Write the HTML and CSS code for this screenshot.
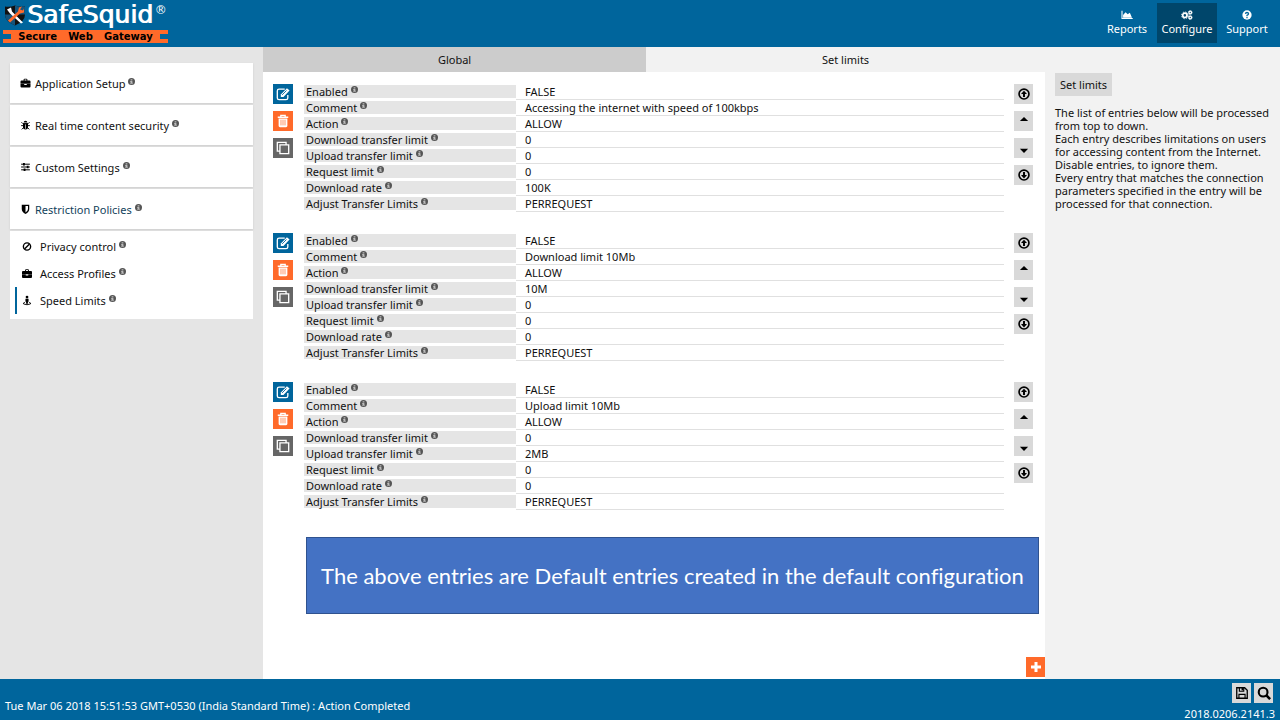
FILE: index.html
```html
<!DOCTYPE html>
<html lang="en">
<head>
<meta charset="utf-8">
<title>SafeSquid - Speed Limits</title>
<link rel="stylesheet" href="styles.css">
</head>
<body>
<svg class="sprite" aria-hidden="true">
  <symbol id="info" viewBox="0 0 16 16"><circle cx="8" cy="8" r="8" fill="#555"/><path d="M6 3h4v2.500H6zM5 7h5v4h1v2H5v-2h1V9H5z" fill="#bbb"/></symbol>
  <symbol id="case" viewBox="0 0 16 16"><path d="M5 4V2.500Q5 1 6.500 1h3Q11 1 11 2.500V4h3.500Q16 4 16 5.500V9H0V5.500Q0 4 1.500 4zm1.500 0h3V2.500h-3zM0 9.500h6v1.500h4V9.500h6v4q0 1.500-1.500 1.500h-13Q0 15 0 13.500z"/></symbol>
  <symbol id="edit" viewBox="0 0 16 16"><path d="M10 2.500H3.500Q1.500 2.500 1.500 4.500v8q0 2 2 2h8q2 0 2-2V9" fill="none" stroke="#fff" stroke-width="1.500"/><path d="M5.500 8.500l7-7L15.500 4l-7 7.500h-3z" fill="#fff"/><path d="M7 9l5-5" stroke="#00659c"/></symbol>
  <symbol id="trash" viewBox="0 0 16 16"><path d="M5.500 3V1.500h5V3M2 3.700h12" fill="none" stroke="#fff" stroke-width="1.500"/><path d="M3 5h10v8.500q0 1.500-1.500 1.500h-7Q3 15 3 13.500z" fill="#fff"/><path d="M5.700 6.500V13M8 6.500V13m2.300-6.500V13" stroke="#ff6a2a" stroke-width=".8"/></symbol>
  <symbol id="copy" viewBox="0 0 16 16"><path d="M4 11.500H1.500v-10h10V4M4.500 4.500h10v10h-10z" fill="none" stroke="#fff" stroke-width="1.500"/></symbol>
  <symbol id="top" viewBox="0 0 16 16"><circle cx="8" cy="8" r="6.600" fill="none" stroke="#000" stroke-width="2.200"/><path d="M8 3.500L12 8H9.300v4H6.700V8H4z"/></symbol>
  <symbol id="bottom" viewBox="0 0 16 16"><circle cx="8" cy="8" r="6.600" fill="none" stroke="#000" stroke-width="2.200"/><path d="M8 12.500L12 8H9.300V4H6.700v4H4z"/></symbol>
  <symbol id="up" viewBox="0 0 16 16"><path d="M2.500 8L8 2.500 13.500 8z"/></symbol>
  <symbol id="down" viewBox="0 0 16 16"><path d="M2.500 9L8 14.500 13.500 9z"/></symbol>
</svg>

<header class="topbar">
  <a class="brand" href="#">
    <span class="brand-main">
      <svg class="shield" viewBox="0 0 22 22" aria-hidden="true"><path d="M1 2q5 1 10-1 5 2 10 1v8q0 7-10 11Q1 17 1 10z" fill="#111"/><path d="M11 1q5 2 10 1v8H11zM1 10h10v11Q1 17 1 10z" fill="#17547b"/><path d="M3 5l4-2 1 4 11 11-2 1L6 9z" fill="#fff"/><path d="M18 2l-2 3 3 1 1-2v4l-4 1L6 18l-2-2L14 7l1-4z" fill="#ff6a2a"/></svg>
      <span class="brand-name">SafeSquid</span><span class="brand-mark">®</span>
    </span>
    <span class="brand-sub"><span>Secure</span><span>Web</span><span>Gateway</span></span>
  </a>
  <nav class="topnav">
    <a href="#"><svg viewBox="0 0 16 14" aria-hidden="true"><path d="M1 1v11h15" fill="none" stroke="#fff" stroke-width="1.500"/><path d="M2.500 11V7L6 3l3 3 3-2 3 7z" fill="#fff"/></svg>Reports</a>
    <a class="active" href="#"><svg viewBox="0 0 16 14" aria-hidden="true"><g fill="none" stroke="#fff"><circle cx="5" cy="7.500" r="3" stroke-width="2.400"/><circle cx="5" cy="7.500" r="4.700" stroke-width="1.200" stroke-dasharray="2 1.690"/><circle cx="12.500" cy="3.500" r="1.800" stroke-width="1.800"/><circle cx="12.500" cy="3.500" r="2.800" stroke-dasharray="1.200 1"/><circle cx="12.500" cy="10.500" r="1.800" stroke-width="1.800"/><circle cx="12.500" cy="10.500" r="2.800" stroke-dasharray="1.200 1"/></g></svg>Configure</a>
    <a href="#"><svg viewBox="0 0 16 14" aria-hidden="true"><circle cx="8" cy="7" r="6.500" fill="#fff"/><path d="M5.800 5.500Q6 3.500 8 3.500t2.200 1.800Q10.200 6.500 8 7.500v1M8 9.500v2" fill="none" stroke="#00659c" stroke-width="1.800"/></svg>Support</a>
  </nav>
</header>

<main class="workspace">
  <aside class="sidebar">
    <nav class="menu">
      <a class="group" href="#"><svg class="icon" aria-hidden="true"><use href="#case"/></svg><span>Application Setup <svg class="info"><use href="#info"/></svg></span></a>
      <a class="group" href="#"><svg class="icon" viewBox="0 0 16 16" aria-hidden="true"><path d="M5 4q0-3 3-3t3 3zM4 5h8v6q0 4-4 4t-4-4z"/><path d="M1.500 3.500L4 6h8l2.500-2.500M1 9h14M2 15l3-3h6l3 3" fill="none" stroke="#000" stroke-width="1.500"/><path d="M8 7v7" stroke="#fff"/></svg><span>Real time content security <svg class="info"><use href="#info"/></svg></span></a>
      <a class="group" href="#"><svg class="icon" viewBox="0 0 16 16" aria-hidden="true"><path d="M1 3.500h14M1 8h14M1 12.500h14" stroke="#000" stroke-width="1.600"/><path d="M4 1.500h3v4H4zM10 6h3v4h-3zM5 10.500h3v4H5z"/></svg><span>Custom Settings <svg class="info"><use href="#info"/></svg></span></a>
      <a class="group open" href="#"><svg class="icon" viewBox="0 0 16 16" aria-hidden="true"><path d="M2 1h12v7q0 5-6 8-6-3-6-8zm6 2v10.500q4-2.500 4-5.500V3z" fill-rule="evenodd"/></svg><span>Restriction Policies <svg class="info"><use href="#info"/></svg></span></a>
      <div class="submenu">
        <a href="#"><svg class="icon" viewBox="0 0 16 16" aria-hidden="true"><circle cx="8" cy="8" r="5.800" fill="none" stroke="#000" stroke-width="2.200"/><path d="M4 12l8-8" stroke="#000" stroke-width="2.200"/></svg><span>Privacy control <svg class="info"><use href="#info"/></svg></span></a>
        <a href="#"><svg class="icon" aria-hidden="true"><use href="#case"/></svg><span>Access Profiles <svg class="info"><use href="#info"/></svg></span></a>
        <a class="current" href="#"><svg class="icon" viewBox="0 0 16 16" aria-hidden="true"><circle cx="8" cy="2.500" r="2.200"/><path d="M5.500 5h5v5H9.500v3h-3v-3h-1z"/><path d="M4.500 11Q1 12 2.500 13.500q5.500 2.500 11 0Q15 12 11.500 11" fill="none" stroke="#000" stroke-width="1.500"/></svg><span>Speed Limits <svg class="info"><use href="#info"/></svg></span></a>
      </div>
    </nav>
  </aside>

  <section class="content">
    <div class="tabs" role="tablist">
      <button class="tab" role="tab" type="button">Global</button>
      <button class="tab selected" role="tab" type="button" aria-selected="true">Set limits</button>
    </div>
    <div class="entries">
      <article class="entry">
        <div class="tools">
          <button class="edit" type="button" aria-label="Edit"><svg><use href="#edit"/></svg></button>
          <button class="delete" type="button" aria-label="Delete"><svg><use href="#trash"/></svg></button>
          <button class="clone" type="button" aria-label="Clone"><svg><use href="#copy"/></svg></button>
        </div>
        <table class="fields">
          <tr><th scope="row">Enabled <svg class="info"><use href="#info"/></svg></th><td>FALSE</td></tr>
          <tr><th scope="row">Comment <svg class="info"><use href="#info"/></svg></th><td>Accessing the internet with speed of 100kbps</td></tr>
          <tr><th scope="row">Action <svg class="info"><use href="#info"/></svg></th><td>ALLOW</td></tr>
          <tr><th scope="row">Download transfer limit <svg class="info"><use href="#info"/></svg></th><td>0</td></tr>
          <tr><th scope="row">Upload transfer limit <svg class="info"><use href="#info"/></svg></th><td>0</td></tr>
          <tr><th scope="row">Request limit <svg class="info"><use href="#info"/></svg></th><td>0</td></tr>
          <tr><th scope="row">Download rate <svg class="info"><use href="#info"/></svg></th><td>100K</td></tr>
          <tr><th scope="row">Adjust Transfer Limits <svg class="info"><use href="#info"/></svg></th><td>PERREQUEST</td></tr>
        </table>
        <div class="tools order">
          <button type="button" aria-label="Move to top"><svg><use href="#top"/></svg></button>
          <button type="button" aria-label="Move up"><svg><use href="#up"/></svg></button>
          <button type="button" aria-label="Move down"><svg><use href="#down"/></svg></button>
          <button type="button" aria-label="Move to bottom"><svg><use href="#bottom"/></svg></button>
        </div>
      </article>
      <article class="entry">
        <div class="tools">
          <button class="edit" type="button" aria-label="Edit"><svg><use href="#edit"/></svg></button>
          <button class="delete" type="button" aria-label="Delete"><svg><use href="#trash"/></svg></button>
          <button class="clone" type="button" aria-label="Clone"><svg><use href="#copy"/></svg></button>
        </div>
        <table class="fields">
          <tr><th scope="row">Enabled <svg class="info"><use href="#info"/></svg></th><td>FALSE</td></tr>
          <tr><th scope="row">Comment <svg class="info"><use href="#info"/></svg></th><td>Download limit 10Mb</td></tr>
          <tr><th scope="row">Action <svg class="info"><use href="#info"/></svg></th><td>ALLOW</td></tr>
          <tr><th scope="row">Download transfer limit <svg class="info"><use href="#info"/></svg></th><td>10M</td></tr>
          <tr><th scope="row">Upload transfer limit <svg class="info"><use href="#info"/></svg></th><td>0</td></tr>
          <tr><th scope="row">Request limit <svg class="info"><use href="#info"/></svg></th><td>0</td></tr>
          <tr><th scope="row">Download rate <svg class="info"><use href="#info"/></svg></th><td>0</td></tr>
          <tr><th scope="row">Adjust Transfer Limits <svg class="info"><use href="#info"/></svg></th><td>PERREQUEST</td></tr>
        </table>
        <div class="tools order">
          <button type="button" aria-label="Move to top"><svg><use href="#top"/></svg></button>
          <button type="button" aria-label="Move up"><svg><use href="#up"/></svg></button>
          <button type="button" aria-label="Move down"><svg><use href="#down"/></svg></button>
          <button type="button" aria-label="Move to bottom"><svg><use href="#bottom"/></svg></button>
        </div>
      </article>
      <article class="entry">
        <div class="tools">
          <button class="edit" type="button" aria-label="Edit"><svg><use href="#edit"/></svg></button>
          <button class="delete" type="button" aria-label="Delete"><svg><use href="#trash"/></svg></button>
          <button class="clone" type="button" aria-label="Clone"><svg><use href="#copy"/></svg></button>
        </div>
        <table class="fields">
          <tr><th scope="row">Enabled <svg class="info"><use href="#info"/></svg></th><td>FALSE</td></tr>
          <tr><th scope="row">Comment <svg class="info"><use href="#info"/></svg></th><td>Upload limit 10Mb</td></tr>
          <tr><th scope="row">Action <svg class="info"><use href="#info"/></svg></th><td>ALLOW</td></tr>
          <tr><th scope="row">Download transfer limit <svg class="info"><use href="#info"/></svg></th><td>0</td></tr>
          <tr><th scope="row">Upload transfer limit <svg class="info"><use href="#info"/></svg></th><td>2MB</td></tr>
          <tr><th scope="row">Request limit <svg class="info"><use href="#info"/></svg></th><td>0</td></tr>
          <tr><th scope="row">Download rate <svg class="info"><use href="#info"/></svg></th><td>0</td></tr>
          <tr><th scope="row">Adjust Transfer Limits <svg class="info"><use href="#info"/></svg></th><td>PERREQUEST</td></tr>
        </table>
        <div class="tools order">
          <button type="button" aria-label="Move to top"><svg><use href="#top"/></svg></button>
          <button type="button" aria-label="Move up"><svg><use href="#up"/></svg></button>
          <button type="button" aria-label="Move down"><svg><use href="#down"/></svg></button>
          <button type="button" aria-label="Move to bottom"><svg><use href="#bottom"/></svg></button>
        </div>
      </article>
    </div>
    <p class="banner">The above entries are Default entries created in the default configuration</p>
    <button class="add" type="button" aria-label="Add entry"><svg viewBox="0 0 16 16"><path d="M8 3v10M3 8h10" stroke="#fff" stroke-width="3"/></svg></button>
  </section>

  <aside class="help">
    <h2>Set limits</h2>
    <p>The list of entries below will be processed from top to down.</p>
    <p>Each entry describes limitations on users for accessing content from the Internet.</p>
    <p>Disable entries, to ignore them.</p>
    <p>Every entry that matches the connection parameters specified in the entry will be processed for that connection.</p>
  </aside>
</main>

<footer class="statusbar">
  <p>Tue Mar 06 2018 15:51:53 GMT+0530 (India Standard Time) : Action Completed</p>
  <div class="status-side">
    <div class="status-tools">
      <button type="button" aria-label="Save"><svg viewBox="0 0 16 16"><path d="M2 2h9l3 3v9H2z" fill="none" stroke="#000" stroke-width="1.500"/><path d="M5 2v4h5V2M4.500 14v-4.500h7V14" fill="none" stroke="#000" stroke-width="1.300"/><path d="M7.500 2h2v3h-2z"/></svg></button>
      <button type="button" aria-label="Search"><svg viewBox="0 0 16 16"><circle cx="7" cy="7" r="5" fill="none" stroke="#000" stroke-width="2.400"/><path d="M10.500 10.500L15 15" stroke="#000" stroke-width="3"/></svg></button>
    </div>
    <span>2018.0206.2141.3</span>
  </div>
</footer>
</body>
</html>
```
FILE: styles.css
```css
* { box-sizing: border-box; }
body {
  margin: 0;
  min-height: 100vh;
  display: flex;
  flex-direction: column;
  font: 11px/13px "Noto Sans", "Open Sans", sans-serif;
  color: #111;
  background: #fff;
}
a { color: inherit; text-decoration: none; }
p, h2 { margin: 0; }
button { border: 0; padding: 0; font: inherit; color: inherit; cursor: pointer; }
svg { display: block; }
.sprite { position: absolute; width: 0; height: 0; }
.info { display: inline-block; width: 7px; height: 7px; vertical-align: 3px; }

.topbar {
  display: flex;
  justify-content: space-between;
  height: 47px;
  background: #00659c;
  color: #fff;
}
.brand { padding-left: 3px; width: 168px; }
.brand-main { display: flex; align-items: flex-start; height: 30px; padding: 4px 0 0 1px; }
.shield { flex: none; width: 22px; height: 23px; }
.brand-name { margin-left: 1px; font: 25px/22px "DejaVu Sans", sans-serif; text-shadow: 1px 0 #fff; }
.brand-mark { margin-left: 2px; font: 12px/12px "DejaVu Sans", sans-serif; }
.brand-sub {
  display: flex;
  justify-content: space-between;
  padding: 0 4px;
  border: solid #ff6a2a;
  border-width: 1px 0;
  background: #ff6a2a;
  color: #000;
  font: bold 10px/11px "DejaVu Sans", sans-serif;
}
.brand-sub::before, .brand-sub::after {
  content: "";
  width: 8px;
  height: 5px;
  margin: 3px -4px;
  background: #00659c;
}
.topnav { display: flex; padding: 3px 3px 4px 0; }
.topnav a {
  display: flex;
  flex-direction: column;
  align-items: center;
  gap: 2px;
  min-width: 60px;
  padding-top: 7px;
}
.topnav svg { width: 12px; height: 10px; }
.topnav .active { background: #00466b; }

.workspace {
  flex: 1;
  display: grid;
  grid-template-columns: 263px minmax(0, 1fr) 235px;
}
.sidebar { padding: 16px 10px; background: #e5e5e5; }
.menu { display: flex; flex-direction: column; }
.group {
  display: flex;
  align-items: center;
  gap: 4px;
  height: 40px;
  margin-bottom: 2px;
  padding-left: 10px;
  background: #fff;
  box-shadow: 0 1px 2px #ccc;
}
.group.open { color: #123f5b; }
.group .icon { width: 11px; height: 10px; }
.submenu { padding: 2px 0 5px 5px; background: #fff; }
.submenu a {
  display: flex;
  align-items: center;
  gap: 8px;
  height: 27px;
  padding-left: 5px;
  border-left: 2px solid #fff;
}
.submenu .icon { width: 10px; height: 11px; }
.submenu .current { border-color: #00659c; }

.content { display: flex; flex-direction: column; }
.tabs { display: grid; grid-template-columns: 49fr 51fr; }
.tab { height: 25px; background: #ccc; }
.tab.selected { background: #f2f2f2; }
.entries { display: flex; flex-direction: column; gap: 21px; padding: 12px 12px 0 10px; }
.entry { display: flex; }
.tools { display: flex; flex-direction: column; gap: 7px; width: 20px; }
.tools button {
  display: flex;
  align-items: center;
  justify-content: center;
  height: 20px;
}
.tools svg { width: 14px; height: 14px; }
.order { width: 19px; }
.order button { background: #d9d9d9; }
.order svg { width: 12px; height: 12px; }
.edit { background: #00659c; }
.delete { background: #ff6a2a; }
.clone { background: #666; }
.fields { flex: 1; margin: 0 10px 0 11px; border-spacing: 0; table-layout: fixed; }
.fields th, .fields td { padding: 0; line-height: 13px; text-align: left; font-weight: normal; }
.fields th {
  width: 212px;
  padding-left: 2px;
  border: solid #fff;
  border-width: 1px 0 2px;
  background: #e5e5e5;
}
.fields td { padding: 1px 0 1px 9px; border-bottom: 1px solid #e0e0e0; }
.banner {
  margin: 27px 6px 0 43px;
  padding: 24px 6px;
  border: 1px solid #2f528f;
  background: #4472c4;
  color: #fff;
  font: 22px/27px Lato, sans-serif;
  font-variant-ligatures: none;
  text-align: center;
}
.add {
  display: grid;
  place-items: center;
  align-self: flex-end;
  width: 19px;
  height: 20px;
  margin: auto 0 2px;
  background: #ff6a2a;
}
.add svg { width: 16px; height: 16px; }

.help { padding: 26px 0 0 10px; background: #f2f2f2; }
.help h2 {
  width: max-content;
  margin-bottom: 10px;
  padding: 5px;
  background: #d9d9d9;
  font: inherit;
}

.statusbar {
  display: flex;
  justify-content: space-between;
  height: 41px;
  padding: 0 5px;
  background: #00659c;
  color: #fff;
}
.statusbar p { padding-top: 20px; }
.status-side { display: flex; flex-direction: column; align-items: flex-end; gap: 4px; padding-top: 4px; }
.status-tools { display: flex; gap: 3px; margin-right: 2px; }
.status-tools button { display: grid; place-items: center; width: 19px; height: 20px; background: #d9d9d9; }
.status-tools svg { width: 14px; height: 14px; }
```
